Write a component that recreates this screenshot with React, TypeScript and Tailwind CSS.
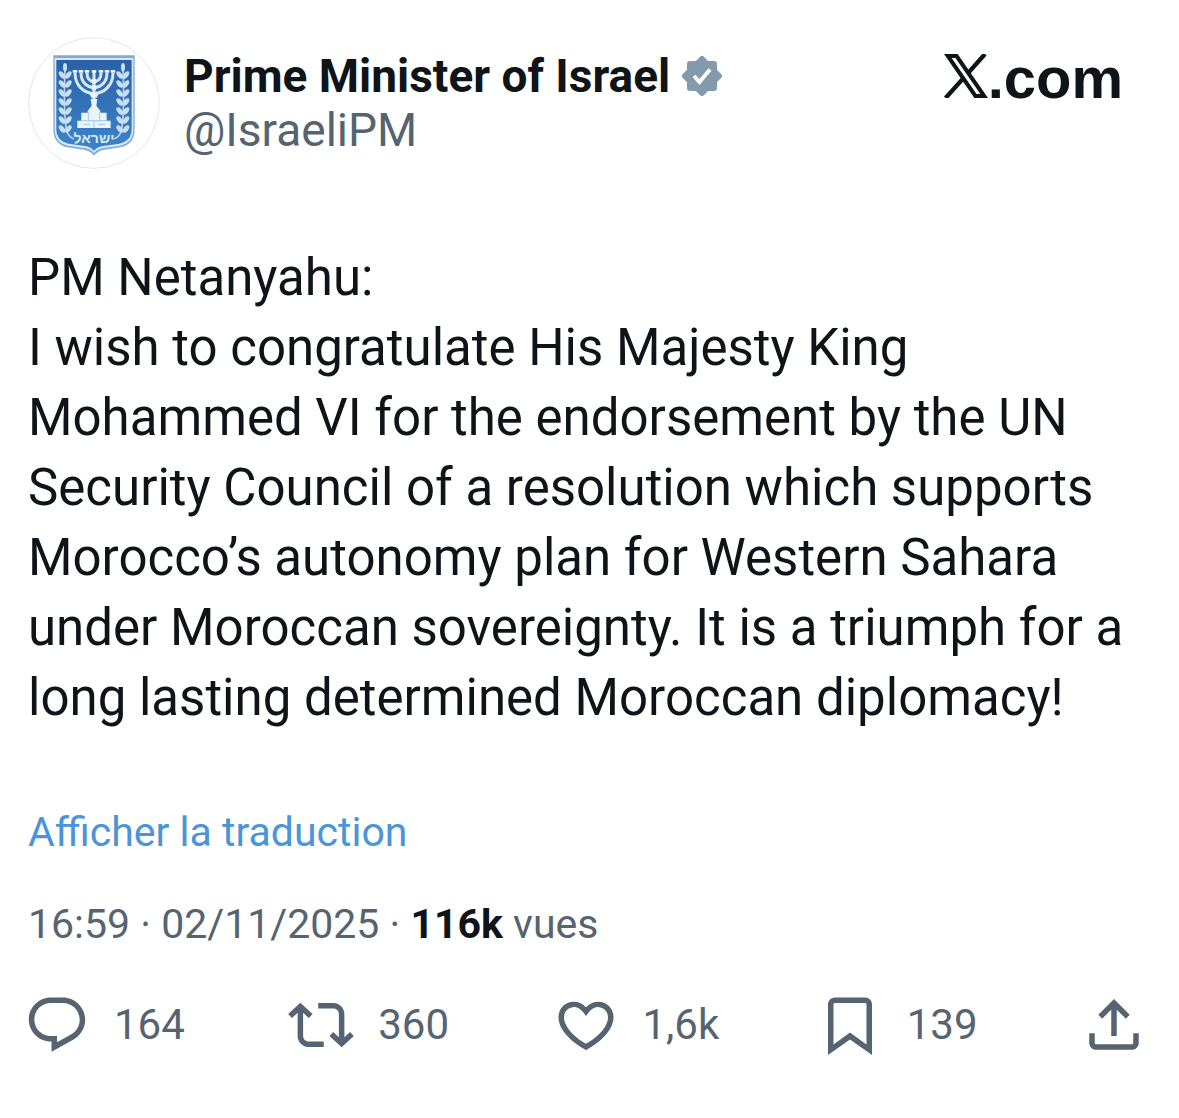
import type { ReactNode } from "react";

const leafRows = [0, 1, 2, 3, 4, 5, 6];

function OliveBranch() {
  return (
    <g fill="#c9dff3">
      <path d="M133 112C131 170 129 250 137 300Q143 322 160 328" fill="none" stroke="#b7d2ec" strokeWidth="5" />
      <ellipse cx="133" cy="113" rx="6" ry="13" />
      {leafRows.map((row) => {
        const y = 136 + row * 27;
        return (
          <g key={row}>
            <ellipse cx="124" cy={y} rx="7" ry="13" transform={`rotate(-38 124 ${y})`} />
            <ellipse cx="143" cy={y} rx="7" ry="13" transform={`rotate(38 143 ${y})`} />
          </g>
        );
      })}
    </g>
  );
}

function Avatar() {
  return (
    <svg viewBox="22 22 396 396" className="size-[132px] shrink-0" role="img" aria-label="Prime Minister of Israel">
      <defs>
        <linearGradient id="shield" x1="0" y1="0" x2="0" y2="1">
          <stop offset="0" stopColor="#2a61a8" />
          <stop offset="1" stopColor="#3d84cb" />
        </linearGradient>
      </defs>
      <circle cx="220" cy="220" r="196" fill="#fff" stroke="#e6e6e8" strokeWidth="3" />
      <path d="M98 77H342V298Q342 344 300 353L246 361Q229 366 220 378Q211 366 194 361L140 353Q98 344 98 298Z" fill="#7fabd9" />
      <path d="M102 85H338V298Q338 340 298 348L244 356Q228 360 220 370Q212 360 196 356L142 348Q102 340 102 298Z" fill="#d9e9f7" />
      <path d="M107 91H333V298Q333 334 296 342L242 350Q227 354 220 363Q213 354 198 350L144 342Q107 334 107 298Z" fill="url(#shield)" />
      <OliveBranch />
      <g transform="translate(440 0) scale(-1 1)">
        <OliveBranch />
      </g>
      <g fill="none" stroke="#d6e7f6" strokeWidth="9">
        <path d="M163 129C163 168 190 191 220 191S277 168 277 129" />
        <path d="M181 129C181 158 199 173 220 173S259 158 259 129" />
        <path d="M199 129C199 146 207 155 220 155S241 146 241 129" />
        <path d="M220 126V246" />
      </g>
      <g fill="#eaf4fc">
        {[163, 181, 199, 220, 241, 259, 277].map((x) => (
          <rect key={x} x={x - 7} y="121" width="14" height="8" rx="2" />
        ))}
        <circle cx="220" cy="155" r="8" />
        <circle cx="220" cy="174" r="8" />
        <path d="M206 191H234L228 204H212Z" />
        <path d="M210 208H230L227 228L239 244V250H201V244L213 228Z" />
        <path d="M182 249H258V273H270V295H170V273H182Z" />
      </g>
      <path d="M182 273H258M203 249V273M237 249V273M220 273V295M188 284H208M232 284H254" stroke="#a3c5e6" strokeWidth="3" />
      <text x="220" y="339" textAnchor="middle" fill="#d9e9f7" fontSize="42" fontWeight="700" fontFamily="'Liberation Sans', 'DejaVu Sans', sans-serif">
        ישראל
      </text>
    </svg>
  );
}

function VerifiedBadge() {
  return (
    <svg viewBox="0 0 40 40" className="size-10 shrink-0" role="img" aria-label="Verified">
      <g fill="#829aab">
        <rect x="5" y="5" width="30" height="30" rx="3" />
        <rect x="5" y="5" width="30" height="30" rx="3" transform="rotate(45 20 20)" />
      </g>
      <path d="M12 20L17.5 26L28 13.5" fill="none" stroke="#fff" strokeWidth="3.8" />
    </svg>
  );
}

function XLogo() {
  return (
    <svg viewBox="0 0 44 44" className="size-11 shrink-0" role="img" aria-label="X">
      <g fill="none" stroke="#0f1419" strokeWidth="4">
        <path d="M3.8 2H12.6L40.2 42H31.4Z" />
        <path d="M41 0L24.5 18.6M1.6 44L19 24.6" strokeWidth="4.4" />
      </g>
    </svg>
  );
}

interface ActionProps {
  label: string;
  count?: string;
  children: ReactNode;
}

function Action({ label, count, children }: ActionProps) {
  return (
    <button type="button" aria-label={label} className={count ? "flex flex-1 items-center gap-6" : "flex items-center"}>
      <svg viewBox="0 0 24 24" fill="currentColor" className="size-[66px] shrink-0">
        {children}
      </svg>
      {count && <span>{count}</span>}
    </button>
  );
}

export default function App() {
  return (
    <article className="bg-white pt-[37px] pr-9 pb-[60px] pl-7 font-['Roboto',sans-serif] text-[41px] leading-[50px] text-[#566370]">
      <header className="flex items-start gap-6">
        <Avatar />
        <div className="mt-3 flex-1 text-[46px] leading-[54px]">
          <div className="flex items-center gap-3">
            <h1 className="font-bold whitespace-nowrap text-[#0f1419]">Prime Minister of Israel</h1>
            <VerifiedBadge />
          </div>
          <p>@IsraeliPM</p>
        </div>
        <div className="mt-3.5 mr-5 flex items-baseline text-[#0f1419]">
          <XLogo />
          <span className="font-['Liberation_Sans',sans-serif] text-[58px] leading-[54px] font-bold">.com</span>
        </div>
      </header>

      <div className="mt-[74px] text-[51px] leading-[70px] text-[#0f1419]">
        <p>PM Netanyahu:</p>
        <p>
          I wish to congratulate His Majesty King Mohammed VI for the endorsement by the UN Security Council of a
          resolution which supports Morocco’s autonomy plan for Western Sahara under Moroccan sovereignty. It is a
          triumph for a long lasting determined Moroccan diplomacy!
        </p>
      </div>

      <a href="#translate" className="mt-[74px] block text-[#4a94d8]">
        Afficher la traduction
      </a>

      <p className="mt-[42px]">
        16:59 · 02/11/2025 · <strong className="font-bold text-[#0f1419]">116k</strong> vues
      </p>

      <div className="-mx-1 mt-[43px] flex text-[42px]">
        <Action label="Reply" count="164">
          <path d="M1.751 10c0-4.42 3.584-8 8.005-8h4.366c4.49 0 8.129 3.64 8.129 8.13 0 2.96-1.607 5.68-4.196 7.11l-8.054 4.46v-3.69h-.067c-4.49.1-8.183-3.51-8.183-8.01zm8.005-6c-3.317 0-6.005 2.69-6.005 6 0 3.37 2.77 6.08 6.138 6.01l.351-.01h1.761v2.3l5.087-2.81c1.951-1.08 3.163-3.13 3.163-5.36 0-3.39-2.744-6.13-6.129-6.13H9.756z" />
        </Action>
        <Action label="Repost" count="360">
          <path d="M4.5 3.88l4.432 4.14-1.364 1.46L5.5 7.55V16c0 1.1.896 2 2 2H13v2H7.5c-2.209 0-4-1.79-4-4V7.55L1.432 9.48.068 8.02 4.5 3.88zM16.5 6H11V4h5.5c2.209 0 4 1.79 4 4v8.45l2.068-1.93 1.364 1.46-4.432 4.14-4.432-4.14 1.364-1.46 2.068 1.93V8c0-1.1-.896-2-2-2z" />
        </Action>
        <Action label="Like" count="1,6k">
          <path d="M16.697 5.5c-1.222-.06-2.679.51-3.89 2.16l-.805 1.09-.806-1.09C9.984 6.01 8.526 5.44 7.304 5.5c-1.243.07-2.349.78-2.91 1.91-.552 1.12-.633 2.78.479 4.82 1.074 1.97 3.257 4.27 7.129 6.61 3.87-2.34 6.052-4.64 7.126-6.61 1.111-2.04 1.03-3.7.477-4.82-.561-1.13-1.666-1.84-2.908-1.91zm4.187 7.69c-1.351 2.48-4.001 5.12-8.379 7.67l-.503.3-.504-.3c-4.379-2.55-7.029-5.19-8.382-7.67-1.36-2.5-1.41-4.86-.514-6.67.887-1.79 2.647-2.91 4.601-3.01 1.651-.09 3.368.56 4.798 2.01 1.429-1.45 3.146-2.1 4.796-2.01 1.954.1 3.714 1.22 4.601 3.01.896 1.81.846 4.17-.514 6.67z" />
        </Action>
        <Action label="Bookmark" count="139">
          <path d="M4 4.5C4 3.12 5.119 2 6.5 2h11C18.881 2 20 3.12 20 4.5v18.44l-8-5.71-8 5.71V4.5zM6.5 4c-.276 0-.5.22-.5.5v14.56l6-4.29 6 4.29V4.5c0-.28-.224-.5-.5-.5h-11z" />
        </Action>
        <Action label="Share">
          <path d="M12 2.59l5.7 5.7-1.41 1.42L13 6.41V16h-2V6.41l-3.3 3.3-1.41-1.42L12 2.59zM21 15l-.02 3.51c0 1.38-1.12 2.49-2.5 2.49H5.5C4.11 21 3 19.88 3 18.5V15h2v3.5c0 .28.22.5.5.5h12.98c.28 0 .5-.22.5-.5L19 15h2z" />
        </Action>
      </div>
    </article>
  );
}
